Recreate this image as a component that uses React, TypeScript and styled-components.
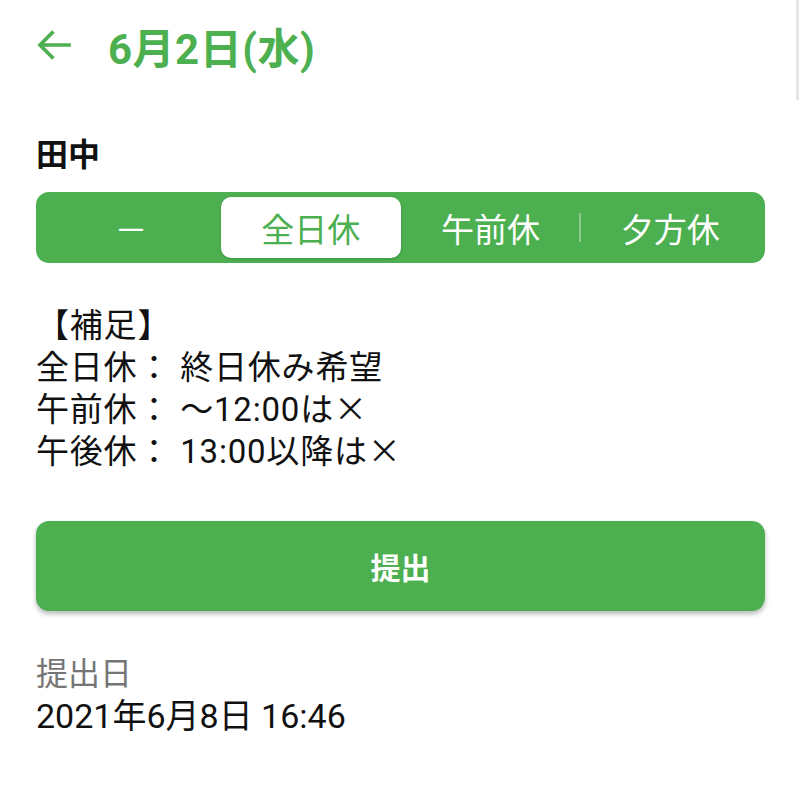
import React, { useState } from "react";
import styled, { createGlobalStyle } from "styled-components";

const GlobalStyle = createGlobalStyle`
  html, body {
    margin: 0;
    padding: 0;
    background: #ffffff;
  }
  body {
    font-family: Roboto, "Noto Sans CJK JP", sans-serif;
    color: #111111;
  }
`;

const GREEN = "#4caf50";

const Screen = styled.div`
  width: 800px;
  min-height: 805px;
  box-sizing: border-box;
  padding: 0 35px 0 36px;
  position: relative;
`;

const ScrollHint = styled.div`
  position: absolute;
  top: 0;
  right: 1px;
  width: 3px;
  height: 100px;
  background: #e6e6e6;
`;

const Header = styled.header`
  height: 90px;
  display: flex;
  align-items: center;
  gap: 34px;
`;

const BackButton = styled.button`
  border: none;
  background: none;
  padding: 0;
  width: 38px;
  height: 38px;
  display: flex;
  align-items: center;
  justify-content: center;
  cursor: pointer;
`;

const Title = styled.h1`
  margin: 0;
  font-size: 42px;
  font-weight: 700;
  color: ${GREEN};
  letter-spacing: 0.5px;
`;

const Name = styled.h2`
  margin: 42px 0 0;
  font-size: 32px;
  line-height: 40px;
  font-weight: 700;
  font-family: "Noto Sans CJK JP", sans-serif;
`;

const Segmented = styled.div`
  margin-top: 20px;
  height: 71px;
  box-sizing: border-box;
  padding: 5px;
  border-radius: 13px;
  background: ${GREEN};
  display: grid;
  grid-template-columns: repeat(4, 1fr);
`;

const Segment = styled.button<{ $active: boolean; $divider: boolean }>`
  position: relative;
  border: none;
  border-radius: 10px;
  font-family: "Noto Sans CJK JP", sans-serif;
  font-size: 33px;
  font-weight: 400;
  background: ${(p) => (p.$active ? "#ffffff" : "transparent")};
  color: ${(p) => (p.$active ? GREEN : "#ffffff")};
  box-shadow: ${(p) => (p.$active ? "0 1px 3px rgba(0,0,0,0.18)" : "none")};
  cursor: pointer;
  padding: 0;

  &::before {
    content: "";
    display: ${(p) => (p.$divider ? "block" : "none")};
    position: absolute;
    left: -1px;
    top: 16px;
    bottom: 16px;
    width: 2px;
    background: rgba(255, 255, 255, 0.35);
  }
`;

const Notes = styled.div`
  margin-top: 42px;
  font-size: 33px;
  line-height: 42px;
  letter-spacing: 0.8px;
  color: #111111;
`;

const NoteLine = styled.div`
  height: 42px;
  white-space: pre;
`;

const Mark = styled.span`
  font-family: "Noto Sans CJK JP", sans-serif;
  line-height: 1;
`;

const SubmitButton = styled.button`
  margin-top: 48px;
  width: 100%;
  height: 90px;
  border: none;
  border-radius: 13px;
  background: ${GREEN};
  color: #ffffff;
  font-family: "Noto Sans CJK JP", sans-serif;
  font-size: 30px;
  font-weight: 700;
  box-shadow: 0 3px 5px rgba(0, 0, 0, 0.28);
  cursor: pointer;
`;

const Label = styled.div`
  margin-top: 42px;
  font-size: 32px;
  line-height: 42px;
  color: #757575;
`;

const Value = styled.div`
  font-size: 34px;
  line-height: 42px;
  color: #111111;
`;

const options = ["－", "全日休", "午前休", "夕方休"];

const notes: [string, string][] = [
  ["【補足】", ""],
  ["全日休： 終日休み希望", ""],
  ["午前休： ～12:00は", "×"],
  ["午後休： 13:00以降は", "×"],
];

export default function App() {
  const [selected, setSelected] = useState(1);

  return (
    <>
      <GlobalStyle />
      <Screen>
        <ScrollHint />
        <Header>
          <BackButton aria-label="back">
            <svg width="38" height="38" viewBox="0 0 24 24">
              <path
                d="M22 12H2.8M11 3.5L2.5 12l8.5 8.5"
                fill="none"
                stroke={GREEN}
                strokeWidth="2.3"
              />
            </svg>
          </BackButton>
          <Title>6月2日(水)</Title>
        </Header>

        <Name>田中</Name>

        <Segmented>
          {options.map((o, i) => (
            <Segment
              key={o}
              $active={i === selected}
              $divider={i === 3 && selected !== 2 && selected !== 3}
              onClick={() => setSelected(i)}
            >
              {o}
            </Segment>
          ))}
        </Segmented>

        <Notes>
          {notes.map(([text, mark]) => (
            <NoteLine key={text}>
              {text}
              {mark && <Mark>{mark}</Mark>}
            </NoteLine>
          ))}
        </Notes>

        <SubmitButton>提出</SubmitButton>

        <Label>提出日</Label>
        <Value>2021年6月8日 16:46</Value>
      </Screen>
    </>
  );
}
